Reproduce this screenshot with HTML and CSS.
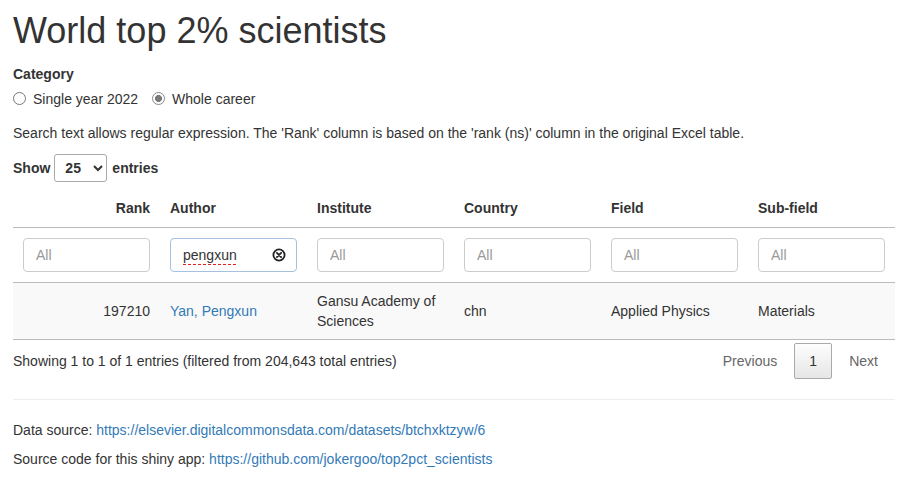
FILE: index.html
```html
<!DOCTYPE html>
<html>
<head>
<meta charset="utf-8">
<link rel="stylesheet" href="styles.css">
</head>
<body>
<div class="page">
  <h1 class="title">World top 2% scientists</h1>
  <div class="form-group">
    <div class="control-label">Category</div>
    <div class="radios">
      <label class="radio"><input type="radio" name="cat"><span>Single year 2022</span></label>
      <label class="radio"><input type="radio" name="cat" checked><span>Whole career</span></label>
    </div>
  </div>
  <p class="note">Search text allows regular expression. The 'Rank' column is based on the 'rank (ns)' column in the original Excel table.</p>
  <div class="length">
    <span>Show</span>
    <select class="len-select"><option>25</option></select>
    <span>entries</span>
  </div>
  <table class="dt">
    <thead>
      <tr class="head">
        <th class="num">Rank</th>
        <th>Author</th>
        <th>Institute</th>
        <th>Country</th>
        <th>Field</th>
        <th>Sub-field</th>
      </tr>
      <tr class="filters">
        <td><input class="filter" placeholder="All"></td>
        <td>
          <div class="filter focus">
            <span class="typed">pengxun</span>
            <svg class="clear" width="14" height="14" viewBox="0 0 14 14"><circle cx="7" cy="7" r="5.6" fill="none" stroke="#222" stroke-width="1.8"/><path d="M4.9 4.9 L9.1 9.1 M9.1 4.9 L4.9 9.1" stroke="#222" stroke-width="1.8" stroke-linecap="round"/></svg>
          </div>
        </td>
        <td><input class="filter" placeholder="All"></td>
        <td><input class="filter" placeholder="All"></td>
        <td><input class="filter" placeholder="All"></td>
        <td><input class="filter" placeholder="All"></td>
      </tr>
    </thead>
    <tbody>
      <tr class="odd">
        <td class="num">197210</td>
        <td><a href="#">Yan, Pengxun</a></td>
        <td>Gansu Academy of Sciences</td>
        <td>chn</td>
        <td>Applied Physics</td>
        <td>Materials</td>
      </tr>
    </tbody>
  </table>
  <div class="dt-footer">
    <div class="info">Showing 1 to 1 of 1 entries (filtered from 204,643 total entries)</div>
    <div class="paging">
      <span class="pbtn disabled">Previous</span>
      <span class="pbtn current">1</span>
      <span class="pbtn disabled">Next</span>
    </div>
  </div>
  <hr class="sep">
  <p class="src">Data source: <a href="#">https://elsevier.digitalcommonsdata.com/datasets/btchxktzyw/6</a></p>
  <p class="src">Source code for this shiny app: <a href="#">https://github.com/jokergoo/top2pct_scientists</a></p>
</div>
</body>
</html>
```

FILE: styles.css
```css
* { box-sizing: border-box; }
html, body { margin: 0; padding: 0; background: #fff; }
body {
  font-family: "Liberation Sans", Arial, sans-serif;
  font-size: 14px;
  line-height: 20px;
  color: #333;
}
a { color: #337ab7; text-decoration: none; }
.page { padding: 0 13px; }
.title {
  font-size: 36px;
  font-weight: 500;
  line-height: 1.1;
  margin: 11px 0 10px;
}
.form-group { margin-bottom: 14px; }
.control-label { font-weight: bold; margin-bottom: 5px; padding-top: 3px; }
.radios { display: flex; gap: 14px; }
.radio { display: flex; align-items: center; gap: 7px; }
.radio input {
  appearance: none;
  -webkit-appearance: none;
  margin: 0;
  width: 13px;
  height: 13px;
  border: 1px solid #767676;
  border-radius: 50%;
  background: #fff;
}
.radio input:checked {
  border-color: #8a8a8a;
  background: radial-gradient(circle, #7a7a7a 0 3.2px, #fff 3.8px);
}
.note { margin: 0 0 10px; }
.length { display: flex; align-items: center; height: 30px; font-weight: bold; }
.len-select {
  font-family: "Liberation Sans", Arial, sans-serif;
  font-size: 14px;
  font-weight: bold;
  color: #333;
  width: 53px;
  height: 28px;
  margin: 0 5px 0 4px;
  padding: 0 4px 0 6px;
  border: 1px solid #aaa;
  border-radius: 3px;
  background: #fff;
}
.dt {
  width: 100%;
  table-layout: fixed;
  border-collapse: collapse;
  margin-top: 1px;
}
.dt th {
  text-align: left;
  font-weight: bold;
  padding: 14px 10px 9px;
  border-bottom: 1px solid #bbb;
}
.dt .num { text-align: right; }
.filters td { padding: 10px; border-bottom: 1px solid #bbb; }
.filter {
  display: block;
  width: 100%;
  height: 34px;
  padding: 6px 12px;
  border: 1px solid #ccc;
  border-radius: 4px;
  font-family: "Liberation Sans", Arial, sans-serif;
  font-size: 14px;
  color: #555;
  background: #fff;
  outline: none;
}
.filter::placeholder { color: #999; }
.filter.focus {
  border-color: #a6c1dd;
  display: flex;
  align-items: center;
  justify-content: space-between;
  padding-right: 10px;
}
.typed {
  color: #333;
  text-decoration: underline dashed #e0201a;
  text-decoration-thickness: 1px;
  text-underline-offset: 4px;
}
.clear { display: block; }
.dt tbody td { padding: 8px 10px; border-bottom: 1px solid #bbb; vertical-align: middle; }
.dt tbody tr.odd { background: #f9f9f9; }
.dt-footer {
  display: flex;
  justify-content: space-between;
  align-items: center;
  margin-top: 3px;
}
.paging { display: flex; margin-right: 2px; }
.pbtn {
  display: inline-block;
  padding: 7px 14px;
  min-width: 38px;
  text-align: center;
  border: 1px solid transparent;
  border-radius: 2px;
  margin-left: 2px;
  color: #333;
}
.pbtn.disabled { color: #666; }
.pbtn.current {
  border-color: #aaa;
  background: linear-gradient(to bottom, #fdfdfd 0%, #e6e6e6 100%);
}
.sep { border: 0; border-top: 1px solid #eee; margin: 20px 0; }
.src { margin: 0 0 9px; }
```
